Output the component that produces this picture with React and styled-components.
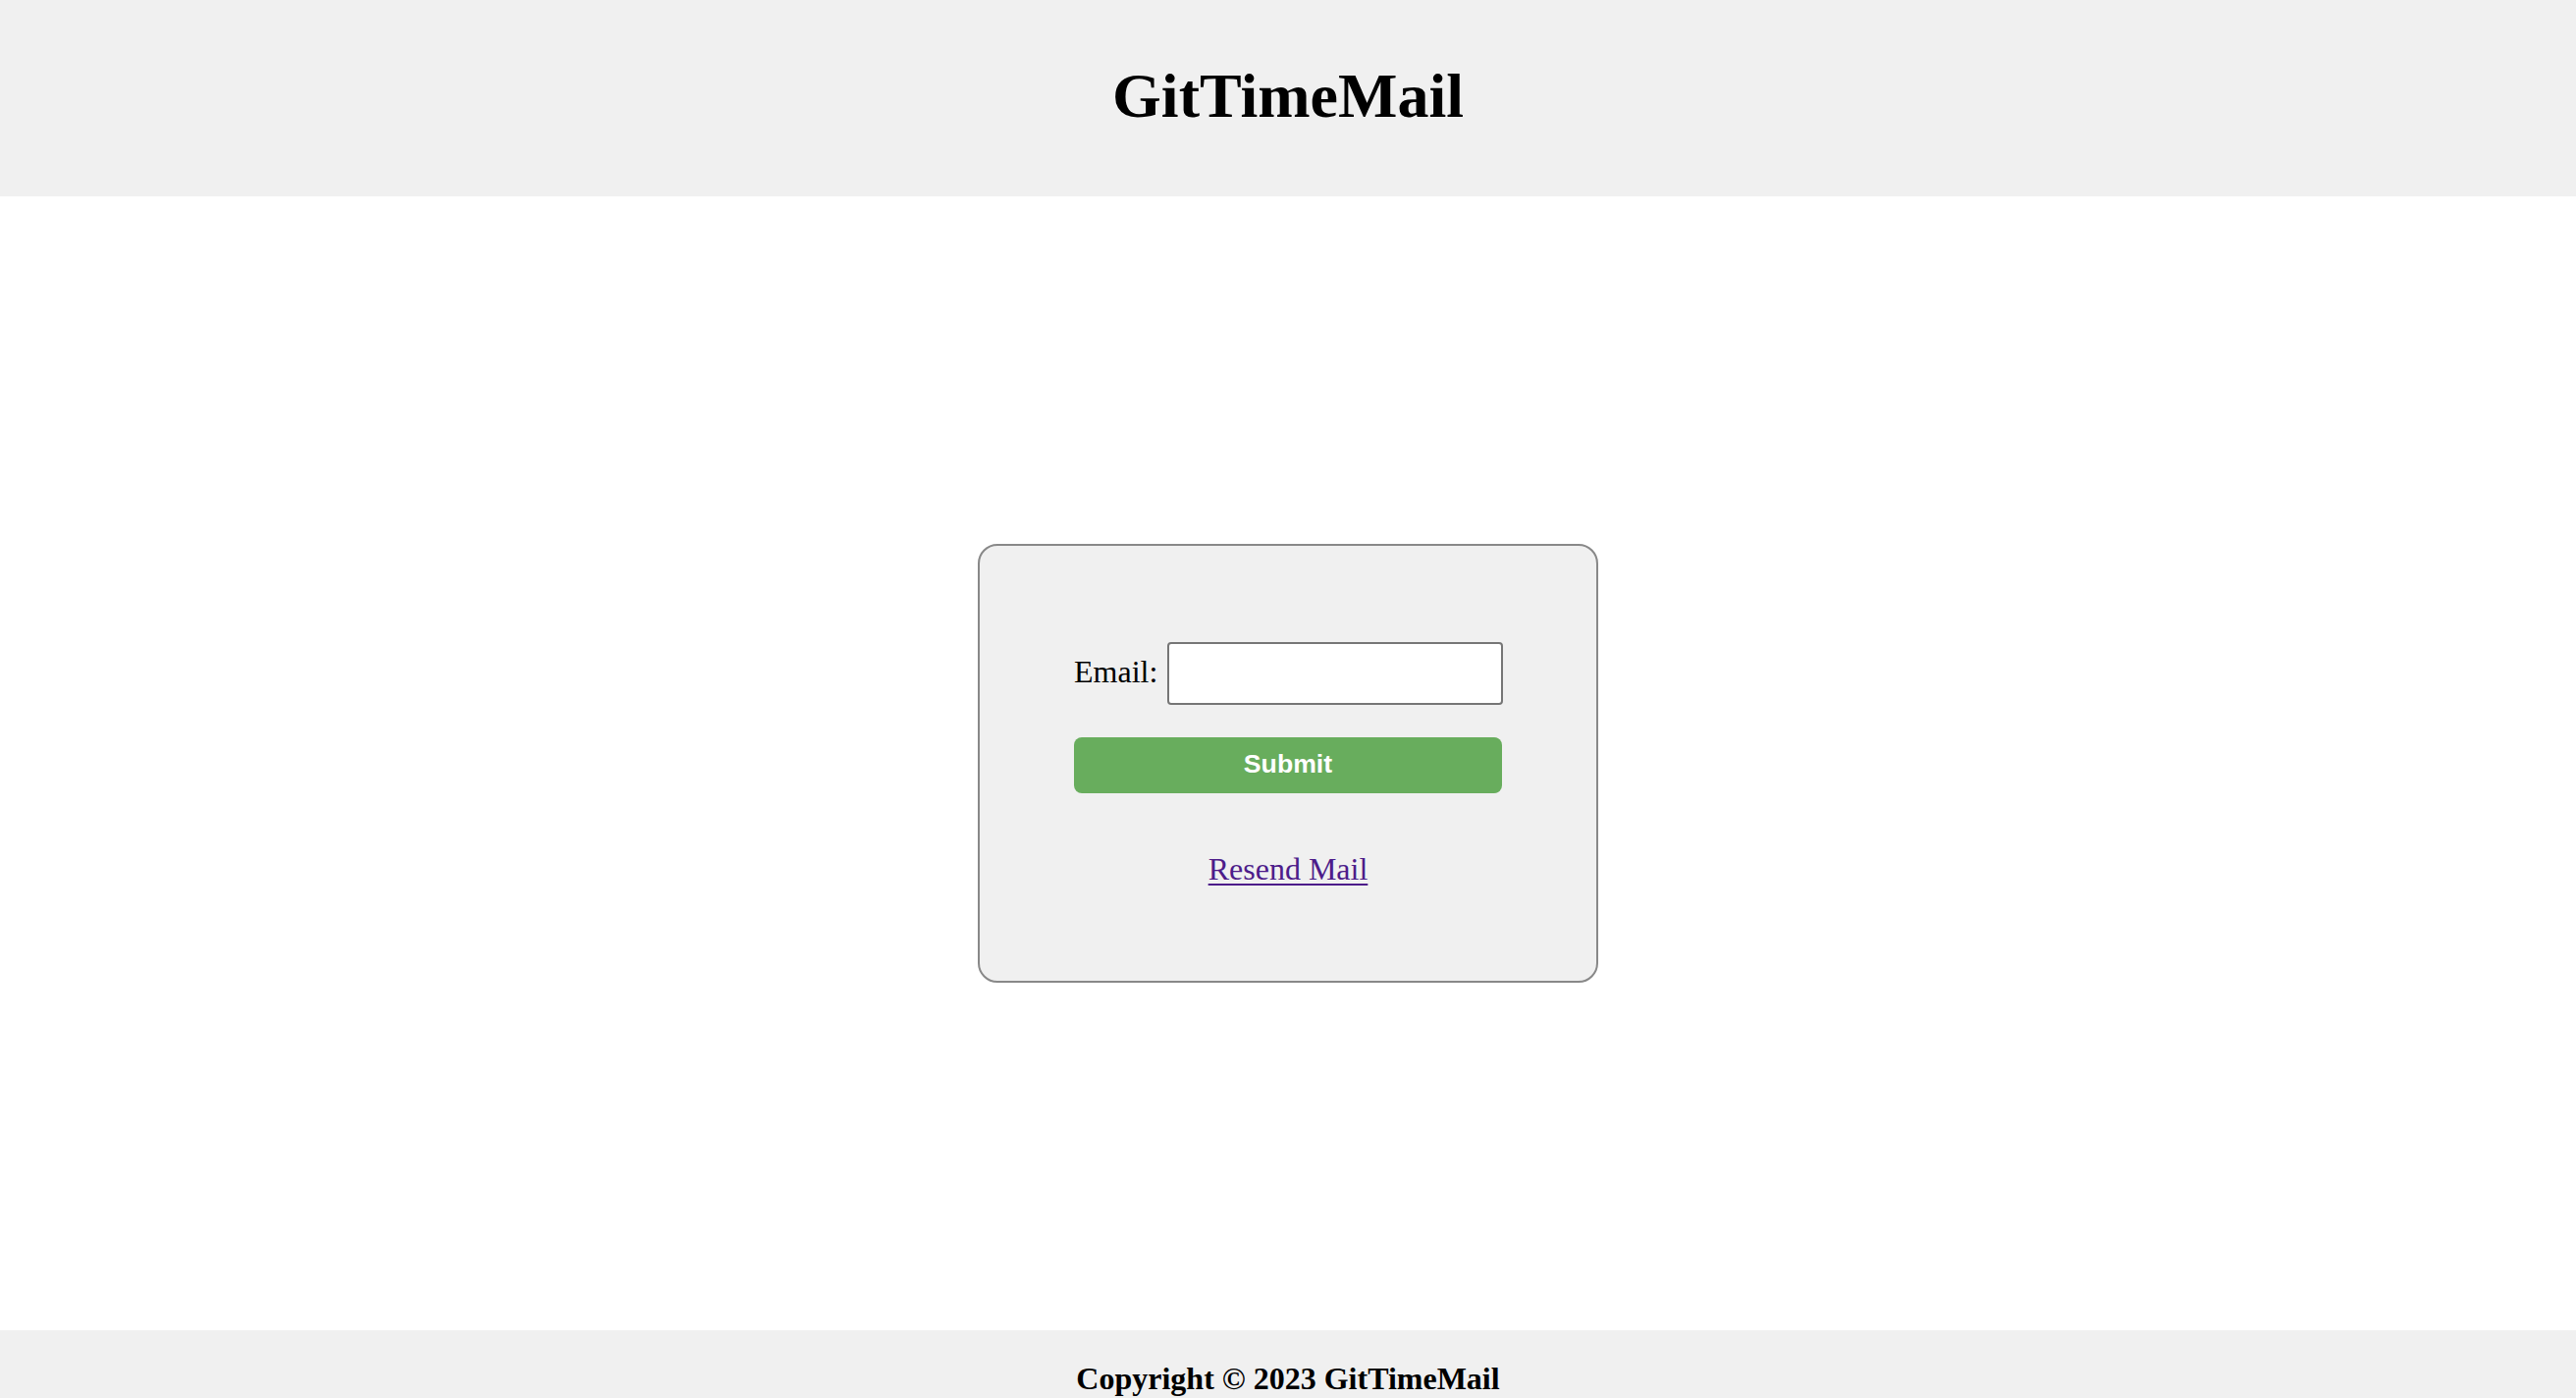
import React from "react";
import styled, { createGlobalStyle } from "styled-components";

const GlobalStyle = createGlobalStyle`
  html, body { margin: 0; padding: 0; background: #ffffff; }
  body { font-family: "Liberation Serif", "Times New Roman", serif; color: #000; }
  * { box-sizing: border-box; }
`;

const Page = styled.div`
  display: flex;
  flex-direction: column;
  width: 100%;
`;

const Header = styled.header`
  height: 200px;
  background: #f0f0f0;
  display: flex;
  align-items: center;
  justify-content: center;
  padding-bottom: 4px;
`;

const Title = styled.h1`
  margin: 0;
  font-family: "Liberation Serif", "Times New Roman", serif;
  font-weight: 700;
  font-size: 64px;
  line-height: normal;
`;

const Main = styled.main`
  height: 1155px;
  display: flex;
  align-items: center;
  justify-content: center;
`;

const Card = styled.div`
  width: 632px;
  height: 447px;
  border: 2px solid #888888;
  border-radius: 20px;
  background: #f0f0f0;
  display: flex;
  flex-direction: column;
  align-items: center;
  justify-content: center;
  padding-top: 3px;
`;

const Form = styled.form`
  width: 436px;
  display: flex;
  flex-direction: column;
  margin: 0;
`;

const Row = styled.div`
  display: flex;
  align-items: center;
  gap: 10px;
`;

const Label = styled.label`
  font-size: 32px;
  line-height: normal;
  padding-bottom: 4px;
`;

const Input = styled.input`
  width: 342px;
  height: 64px;
  border: 2px solid #767676;
  border-radius: 4px;
  background: #ffffff;
  padding: 2px 8px;
  font-size: 26px;
  outline: none;
`;

const SubmitButton = styled.button`
  margin-top: 33px;
  width: 436px;
  height: 57px;
  border: none;
  border-radius: 8px;
  background: #68ad5d;
  color: #ffffff;
  font-family: "Liberation Sans", Arial, sans-serif;
  font-weight: 700;
  font-size: 26.67px;
  cursor: pointer;
  padding: 0 0 2px;
`;

const LinkRow = styled.div`
  margin-top: 59px;
  text-align: center;
`;

const ResendLink = styled.a`
  font-size: 32px;
  line-height: normal;
  color: #4d1c8a;
  text-decoration: underline;
  text-underline-offset: 4px;
  text-decoration-thickness: 2px;
`;

const Footer = styled.footer`
  background: #f0f0f0;
  padding: 31px 0 30px;
  display: flex;
  justify-content: center;
`;

const FooterText = styled.p`
  margin: 0;
  font-size: 32px;
  font-weight: 700;
  line-height: normal;
`;

export default function App() {
  return (
    <>
      <GlobalStyle />
      <Page>
        <Header>
          <Title>GitTimeMail</Title>
        </Header>
        <Main>
          <Card>
            <Form onSubmit={(e) => e.preventDefault()}>
              <Row>
                <Label htmlFor="email">Email:</Label>
                <Input id="email" type="email" />
              </Row>
              <SubmitButton type="submit">Submit</SubmitButton>
              <LinkRow>
                <ResendLink href="#resend">Resend Mail</ResendLink>
              </LinkRow>
            </Form>
          </Card>
        </Main>
        <Footer>
          <FooterText>Copyright © 2023 GitTimeMail</FooterText>
        </Footer>
      </Page>
    </>
  );
}
